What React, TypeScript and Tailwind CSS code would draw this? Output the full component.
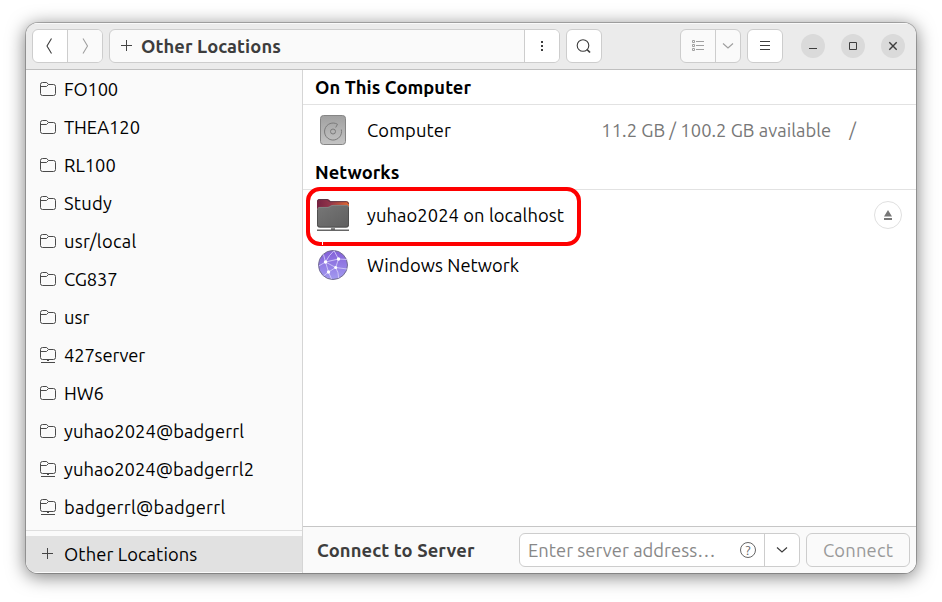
import type { ReactNode } from "react";

type Place = { name: string; remote?: boolean; tracking: string };

const places: Place[] = [
  { name: "FO100", tracking: "tracking-[-0.18px]" },
  { name: "THEA120", tracking: "tracking-[-0.08px]" },
  { name: "RL100", tracking: "tracking-[0px]" },
  { name: "Study", tracking: "tracking-[0.25px]" },
  { name: "usr/local", tracking: "tracking-[0.33px]" },
  { name: "CG837", tracking: "tracking-[-0.18px]" },
  { name: "usr", tracking: "tracking-[0.1px]" },
  { name: "427server", remote: true, tracking: "tracking-[-0.14px]" },
  { name: "HW6", tracking: "tracking-[-0.1px]" },
  { name: "yuhao2024@badgerrl", tracking: "tracking-[0.07px]" },
  { name: "yuhao2024@badgerrl2", remote: true, tracking: "tracking-[0.05px]" },
  { name: "badgerrl@badgerrl", remote: true, tracking: "tracking-[0.22px]" },
];

function FolderIcon({ remote }: { remote?: boolean }) {
  return (
    <svg width="16" height="16" viewBox="0 0 16 16" fill="none" stroke="#4a4a4a" className="shrink-0">
      {remote ? (
        <>
          <path d="M.5 10.5v-8a2 2 0 0 1 2-2h4.200l1.800 2h5a2 2 0 0 1 2 2v6a2 2 0 0 1-2 2h-11a2 2 0 0 1-2-2zM.5 4.500h6l2-2" />
          <path d="M1 15.500h14M7 13.500h2" />
        </>
      ) : (
        <path d="M.5 12.500v-9a2 2 0 0 1 2-2h4.200l1.800 2h5a2 2 0 0 1 2 2v7a2 2 0 0 1-2 2h-11a2 2 0 0 1-2-2zM.5 5.500h6l2-2" />
      )}
    </svg>
  );
}

function PlusIcon({ className }: { className: string }) {
  return (
    <svg width="11" height="11" viewBox="0 0 11 11" stroke="#444" fill="none" className={className}>
      <path d="M0 5.500h11M5.500 0v11" />
    </svg>
  );
}

function ChevronDown({ color }: { color: string }) {
  return (
    <svg width="12" height="8" viewBox="0 0 12 8" fill="none" stroke={color} strokeWidth="1.200">
      <path d="M1 1.500l5 4.500 5-4.500" />
    </svg>
  );
}

function DiskIcon() {
  return (
    <svg width="34" height="34" viewBox="0 0 34 34" fill="none">
      <defs>
        <linearGradient id="disk" x1="0" y1="0" x2="0" y2="1">
          <stop offset="0" stopColor="#a0a0a0" />
          <stop offset="1" stopColor="#c4c4c4" />
        </linearGradient>
      </defs>
      <rect x="4.500" y="2.500" width="25" height="29" rx="3" fill="url(#disk)" stroke="#858585" />
      <path d="M25.300 16.500a8.500 8.500 0 1 1-3.800-5.200l-1.800 3.200" stroke="#7b7b7b" />
      <circle cx="17" cy="18.500" r="2.500" stroke="#7b7b7b" />
    </svg>
  );
}

function RemoteFolderIcon() {
  return (
    <svg width="34" height="34" viewBox="0 0 34 34" fill="none">
      <defs>
        <linearGradient id="tab" x1="0" y1="0" x2="1" y2="0">
          <stop offset="0" stopColor="#762242" />
          <stop offset=".4" stopColor="#91344a" />
          <stop offset="1" stopColor="#e3692f" />
        </linearGradient>
        <linearGradient id="front" x1="0" y1="0" x2="1" y2="1">
          <stop offset="0" stopColor="#777" />
          <stop offset="1" stopColor="#5f5f5f" />
        </linearGradient>
      </defs>
      <path d="M1 28V3.500Q1 1 3.500 1h7.500q1.500 0 2.500 1l1.200 1.200H30.500Q33 3.200 33 6v22z" fill="url(#tab)" />
      <path d="M1.500 3.500Q1.500 1.500 3.500 1.500h7.500l2.800 2.200H30.500q2 .3 2 2.300" stroke="#5d3545" />
      <path d="M1 12q0-2.500 2.500-3h8q1.500 0 2.500-1t2.500-1h14Q33 7 33 9.500v17.200q0 2.800-2.500 2.800h-27Q1 29.500 1 26.700z" fill="url(#front)" />
      <path d="M1.500 12v14.500q0 2.500 2.500 2.500h26q2.500 0 2.500-2.500V9.500" stroke="#505050" />
      <path d="M2 10q1-.6 2-.6h8q1.500-.2 2.500-1t2.500-1h13.500q1.500 0 2 1.500" stroke="#8b8b8b" strokeWidth=".7" />
      <path d="M1 32.300h32M15 31h4" stroke="#666" strokeWidth="1.500" />
    </svg>
  );
}

function NetworkIcon() {
  return (
    <svg width="34" height="34" viewBox="0 0 34 34" fill="none">
      <defs>
        <linearGradient id="globe" x1="0" y1="0" x2="0" y2="1">
          <stop offset="0" stopColor="#835fd8" />
          <stop offset="1" stopColor="#a29af0" />
        </linearGradient>
      </defs>
      <circle cx="17" cy="17" r="14.500" fill="url(#globe)" stroke="#746f91" />
      <g stroke="#d0c8f7" strokeWidth=".9">
        <path d="M9.500 14l13-3M9.500 14l10.200 5.500M22.500 11l-2.800 8.500M12.500 24l7.200-4.500M9.500 14l3 10M9.500 14L2.700 18M9.500 14L7.500 6.500M22.500 11l9 .5M22.500 11L18 2.700M19.700 19.500l11.500 1.500M12.500 24l-5 4M12.500 24l3 7" />
        <path d="M9.500 14Q13 7 18 2.700M19.700 19.500q3 5 3 10.500" />
      </g>
      <g fill="#fff">
        <circle cx="9.500" cy="14" r="1.700" />
        <circle cx="22.500" cy="11" r="1.700" />
        <circle cx="19.700" cy="19.500" r="1.500" />
        <circle cx="12.500" cy="24" r="1.700" />
      </g>
    </svg>
  );
}

function WindowButton({ children }: { children: ReactNode }) {
  return (
    <button className="flex size-6 items-center justify-center rounded-full bg-[#dadada]">
      <svg width="12" height="12" viewBox="0 0 12 12" fill="none" stroke="#3d3d3d">
        {children}
      </svg>
    </button>
  );
}

function HeaderBar() {
  return (
    <header className="flex h-[47px] shrink-0 items-center border-b border-[#bfbfbf] bg-[#ebebeb] pr-[11px] pl-[6px] shadow-[inset_0_1px_0_#f9f9f9]">
      <div className="flex h-[34px] w-[71px] overflow-hidden rounded-[6px] border border-[#cdcdcd] bg-white">
        <button className="flex w-[35px] items-center justify-center border-r border-[#cdcdcd]">
          <svg width="8" height="16" viewBox="0 0 8 16" fill="none" stroke="#3d3d3d" strokeWidth="1.100">
            <path d="M5.500 .5L1 8l4.500 7.500" />
          </svg>
        </button>
        <button className="flex flex-1 items-center justify-center bg-[#fafafa]">
          <svg width="8" height="16" viewBox="0 0 8 16" fill="none" stroke="#a0a0a0" strokeWidth="1.100">
            <path d="M2 .5L6.500 8l-4.500 7.500" />
          </svg>
        </button>
      </div>
      <div className="ml-[6px] flex h-[34px] w-[451px] overflow-hidden rounded-[6px] border border-[#cdcdcd] bg-[#fafafa]">
        <div className="flex flex-1 items-center pl-[11px]">
          <PlusIcon className="mb-px" />
          <span className="ml-[9px] text-[18.33px] font-bold tracking-[0.09px] whitespace-nowrap text-[#3d3d3d]">Other Locations</span>
        </div>
        <button className="flex w-[35px] items-center justify-center border-l border-[#cdcdcd] bg-white">
          <svg width="2" height="10" viewBox="0 0 2 10" fill="#3d3d3d">
            <path d="M0 0h2v2H0zM0 4h2v2H0zM0 8h2v2H0z" />
          </svg>
        </button>
      </div>
      <button className="ml-[6px] flex h-[34px] w-[36px] items-center justify-center rounded-[6px] border border-[#cdcdcd] bg-white">
        <svg width="16" height="16" viewBox="0 0 16 16" fill="none" stroke="#3d3d3d">
          <circle cx="7" cy="7.500" r="5.800" strokeWidth="1.100" />
          <path d="M11 11.500l3 3" strokeWidth="1.700" />
        </svg>
      </button>
      <div className="ml-auto flex h-[34px] w-[61px] overflow-hidden rounded-[6px] border border-[#cdcdcd] bg-[#fafafa]">
        <button className="flex w-[35px] items-center justify-center border-r border-[#cdcdcd]">
          <svg width="13" height="12" viewBox="0 0 13 12" fill="none" stroke="#a0a0a0">
            <path d="M.5 .5h2v2h-2zM.5 4.500h2v2h-2zM.5 8.500h2v2h-2zM4 1.500h8M4 5.500h8M4 9.500h8" />
          </svg>
        </button>
        <button className="flex flex-1 items-center justify-center">
          <ChevronDown color="#a0a0a0" />
        </button>
      </div>
      <button className="ml-[6px] flex h-[34px] w-[36px] items-center justify-center rounded-[6px] border border-[#cdcdcd] bg-white">
        <svg width="10" height="10" viewBox="0 0 10 10" stroke="#3d3d3d">
          <path d="M0 .5h10M0 4.500h10M0 8.500h10" />
        </svg>
      </button>
      <div className="ml-[18px] flex gap-4">
        <WindowButton>
          <path d="M2 8.500h8" />
        </WindowButton>
        <WindowButton>
          <path d="M2.500 2.500h7v7h-7z" />
        </WindowButton>
        <WindowButton>
          <path d="M2.300 2.300l7.400 7.400M9.700 2.300L2.300 9.700" strokeWidth="1.400" />
        </WindowButton>
      </div>
    </header>
  );
}

function Sidebar() {
  return (
    <nav className="flex w-[277px] shrink-0 flex-col border-r border-[#d5d5d5] bg-[#fafafa]">
      {places.map((place) => (
        <div key={place.name} className="flex h-[38px] items-center gap-2 pl-[14px]">
          <FolderIcon remote={place.remote} />
          <span className={`text-[18.33px] whitespace-nowrap ${place.tracking}`}>{place.name}</span>
        </div>
      ))}
      <div className="mt-1 h-px bg-[#dedede]" />
      <div className="mt-[5px] flex h-9 items-center bg-[#e1e1e1] pl-4">
        <PlusIcon className="mb-[2px]" />
        <span className="ml-[11px] text-[18.33px] tracking-[0.1px]">Other Locations</span>
      </div>
    </nav>
  );
}

function SectionTitle({ children }: { children: ReactNode }) {
  return <h2 className="flex h-[35px] items-center border-b border-[#e2e2e2] pl-3 text-[18.33px] font-bold tracking-[0.06px]">{children}</h2>;
}

function Content() {
  return (
    <main className="flex min-w-0 flex-1 flex-col bg-white">
      <SectionTitle>On This Computer</SectionTitle>
      <div className="flex h-[50px] items-center pl-[13px]">
        <DiskIcon />
        <span className="ml-[17px] text-[18.33px] tracking-[0.12px]">Computer</span>
        <span className="ml-auto text-[18.33px] tracking-[0.04px] whitespace-nowrap text-[#777]">11.2 GB / 100.2 GB available</span>
        <span className="mr-[60px] ml-[18px] text-[18.33px] text-[#777]">/</span>
      </div>
      <SectionTitle>Networks</SectionTitle>
      <div className="relative flex h-[50px] items-center pr-[14px] pl-[13px]">
        <RemoteFolderIcon />
        <span className="ml-[17px] text-[18.33px] tracking-[0.08px]">yuhao2024 on localhost</span>
        <button className="ml-auto flex size-7 items-center justify-center rounded-full border border-[#e0e0e0]">
          <svg width="8" height="10" viewBox="0 0 8 10" fill="#777">
            <path d="M4 0l4 6.500H0zM0 8h8v2H0z" />
          </svg>
        </button>
        <div className="absolute top-[-3px] left-[3px] h-[59px] w-[275px] rounded-[14px] border-4 border-[#fe0000]" />
        <div className="absolute top-[52px] left-[19px] h-[3px] w-px bg-white" />
      </div>
      <div className="flex h-[50px] items-center pl-[13px]">
        <NetworkIcon />
        <span className="ml-[17px] text-[18.33px] tracking-[0.03px]">Windows Network</span>
      </div>
      <footer className="mt-auto flex h-[47px] items-center border-t border-[#c6c6c6] bg-[#fafafa] pr-[6px] pl-[14px]">
        <span className="text-[18.33px] font-bold tracking-[0.12px] whitespace-nowrap text-[#3d3d3d]">Connect to Server</span>
        <div className="ml-auto flex h-[34px] w-[281px] overflow-hidden rounded-[6px] border border-[#cdcdcd] bg-white">
          <div className="flex flex-1 items-center pr-2 pl-2">
            <span className="text-[18.33px] tracking-[0.03px] whitespace-nowrap text-[#888]">Enter server address…</span>
            <span className="ml-auto flex size-4 items-center justify-center rounded-full border border-[#666] text-[13px] leading-none text-[#666]">?</span>
          </div>
          <button className="flex w-[35px] items-center justify-center border-l border-[#cdcdcd]">
            <ChevronDown color="#3d3d3d" />
          </button>
        </div>
        <button className="ml-[6px] h-[34px] w-[104px] rounded-[6px] border border-[#cdcdcd] text-[18.33px] tracking-[0.2px] text-[#999]">Connect</button>
      </footer>
    </main>
  );
}

export default function App() {
  return (
    <div className="h-[602px] w-[942px] overflow-hidden bg-white pt-[23px] pl-[26px] font-['Ubuntu','Noto_Sans',sans-serif] leading-6 text-black">
      <div className="flex h-[550px] w-[890px] flex-col overflow-hidden rounded-[12px] shadow-[0_0_0_1px_rgba(0,0,0,0.23),0_3px_18px_1px_rgba(0,0,0,0.5)]">
        <HeaderBar />
        <div className="flex min-h-0 flex-1">
          <Sidebar />
          <Content />
        </div>
      </div>
    </div>
  );
}
